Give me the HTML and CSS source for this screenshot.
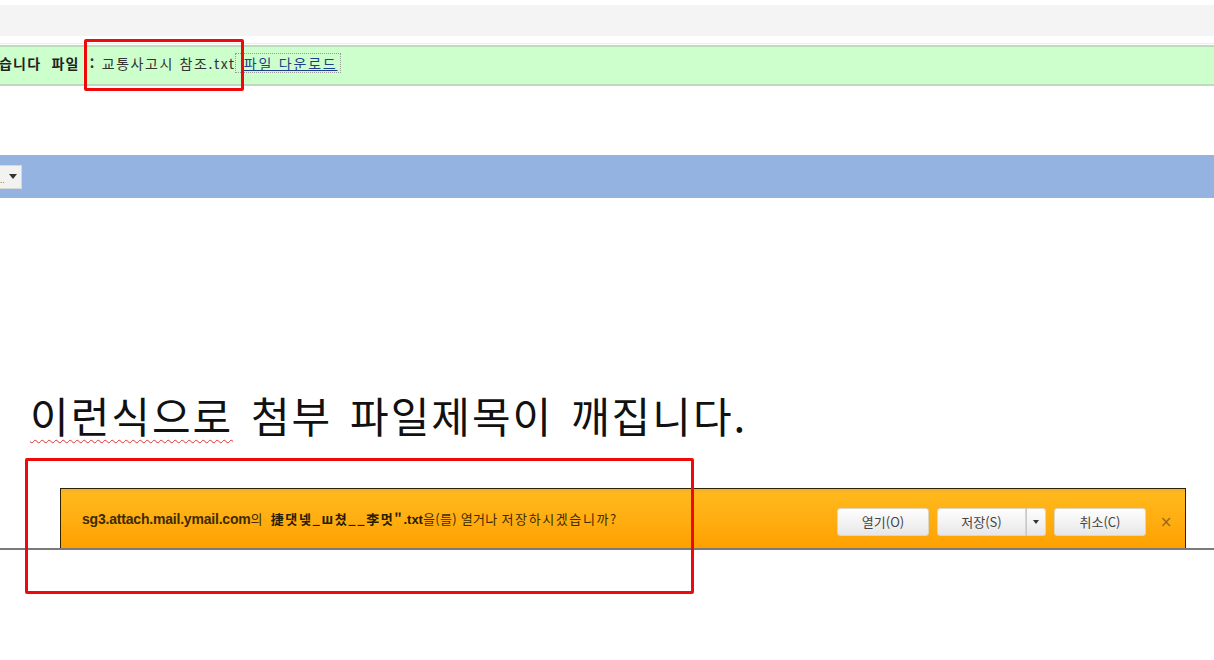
FILE: index.html
```html
<!DOCTYPE html>
<html lang="ko">
<head>
<meta charset="utf-8">
<link rel="stylesheet" href="styles.css">
</head>
<body>
<div class="page">
  <div class="topbar"></div>
  <div class="sep"></div>
  <div class="greenbar">
    <span class="bold">습니다&nbsp; 파일</span><span class="colon">&nbsp;:&nbsp;</span><span class="plain">교통사고시 참조.txt</span><a class="dl">파일 다운로드</a>
  </div>
  <div class="bluebar">
    <div class="select"><span class="sel-text">..</span><span class="caret"></span></div>
  </div>
  <h1 class="big"><span class="spell">이런식으로</span> 첨부 파일제목이 깨집니다.</h1>
  <div class="dialog-area">
    <div class="notice">
      <div class="msg"><span class="host">sg3.attach.mail.ymail.com</span>의 <span class="garbled">捷댓넺_ш쳤__李멋"</span><span class="ext">.txt</span>을(를) 열거나 <span class="q">저장하시겠습니까?</span></div>
      <div class="actions">
        <button class="btn">열기(O)</button>
        <div class="split">
          <button class="btn btn-main">저장(S)</button>
          <button class="btn btn-drop"><span class="caret small"></span></button>
        </div>
        <button class="btn">취소(C)</button>
        <span class="close">×</span>
      </div>
    </div>
  </div>
  <div class="mark mark-file"></div>
  <div class="mark mark-dialog"></div>
</div>
</body>
</html>
```

FILE: styles.css
```css
html, body {
  margin: 0;
  padding: 0;
  background: #ffffff;
}
.page {
  position: relative;
  width: 1214px;
  height: 660px;
  overflow: hidden;
  padding-top: 5px;
  box-sizing: border-box;
  font-family: "Noto Sans CJK KR", "Noto Sans", sans-serif;
}
.topbar {
  height: 31px;
  background: #f4f4f4;
}
.sep {
  height: 4px;
  margin-top: 3px;
  border-bottom: 1px solid #f4ecf4;
  margin-bottom: 1px;
}
.greenbar {
  height: 37px;
  box-sizing: content-box;
  background: #ccffcc;
  border-top: 2px solid #bcdcbc;
  border-bottom: 2px solid #bcdcbc;
  display: flex;
  align-items: center;
  font-size: 14px;
  line-height: 18px;
  color: #333;
  white-space: nowrap;
  letter-spacing: 1.2px;
}
.greenbar > * {
  position: relative;
  top: -3px;
}
.greenbar .bold {
  font-weight: 700;
  color: #222;
  margin-left: -1px;
}
.greenbar .colon {
  font-weight: 700;
  color: #333;
  padding-left: 5px;
  padding-right: 1px;
}
.greenbar .plain {
  color: #333;
  letter-spacing: 1.6px;
}
.greenbar .dl {
  color: #1c3f8c;
  text-decoration: underline;
  margin-left: 0;
  padding: 0 2px 0 8px;
  letter-spacing: 1.8px;
  outline: 1px dotted #999;
}
.bluebar {
  margin-top: 69px;
  height: 43px;
  background: #95b3e0;
  display: flex;
  align-items: center;
}
.select {
  width: 22px;
  height: 24px;
  background: #f2f2f0;
  border: 1px solid #d8d8d8;
  border-left: none;
  display: flex;
  align-items: center;
  justify-content: flex-end;
  padding-right: 4px;
  box-sizing: border-box;
  position: relative;
}
.sel-text {
  position: absolute;
  left: 0;
  bottom: 4px;
  font-size: 8px;
  color: #777;
  line-height: 1;
}
.caret {
  width: 0;
  height: 0;
  border-left: 4px solid transparent;
  border-right: 4px solid transparent;
  border-top: 5px solid #333;
}
.caret.small {
  border-left-width: 3px;
  border-right-width: 3px;
  border-top-width: 4px;
}
.big {
  margin: 192px 0 0 30px;
  font-size: 42px;
  font-weight: 400;
  line-height: 50px;
  color: #111;
  letter-spacing: 2px;
  word-spacing: 4px;
  white-space: nowrap;
}
.spell {
  text-decoration: underline wavy #e03030;
  text-decoration-thickness: 1px;
  text-underline-offset: 6px;
}
.dialog-area {
  margin-top: 48px;
  border-bottom: 2px solid #7a7a7a;
  padding-left: 60px;
  display: flex;
}
.notice {
  width: 1126px;
  height: 60px;
  box-sizing: border-box;
  border: 1px solid #2e2200;
  border-bottom: none;
  background: linear-gradient(to bottom, #eeb030 0%, #ffb81c 8%, #ffad10 55%, #ffa000 100%);
  display: flex;
  align-items: center;
  justify-content: space-between;
  padding: 0 0 0 21px;
}
.msg {
  font-size: 13px;
  color: #3d2b00;
  white-space: nowrap;
  letter-spacing: 0.3px;
}
.msg .host {
  font-family: "Liberation Sans", "Noto Sans", sans-serif;
  font-weight: 700;
  font-size: 14px;
  letter-spacing: -0.2px;
}
.msg .garbled {
  font-weight: 700;
  color: #2a1d00;
  letter-spacing: 1.6px;
  margin-left: 4px;
}
.msg .ext {
  font-family: "Liberation Sans", "Noto Sans", sans-serif;
  font-weight: 700;
  font-size: 13px;
  color: #2a1d00;
  letter-spacing: 0;
}
.msg .q {
  letter-spacing: 1.6px;
}
.actions {
  display: flex;
  align-items: center;
  gap: 8px;
  padding-right: 12px;
  padding-top: 6px;
}
.btn {
  height: 28px;
  width: 92px;
  border: 1px solid #e0d6bc;
  border-radius: 3px;
  background: linear-gradient(to bottom, #fdfdfd 0%, #f2f2f2 55%, #e6e6e6 100%);
  font-family: "Noto Sans CJK KR", "Noto Sans", sans-serif;
  font-size: 13px;
  color: #444;
  padding: 0;
  display: flex;
  align-items: center;
  justify-content: center;
}
.split {
  display: flex;
}
.btn-main {
  width: 89px;
  border-radius: 3px 0 0 3px;
}
.btn-drop {
  width: 20px;
  border-left: 1px solid #c8c8c8;
  border-radius: 0 3px 3px 0;
}
.close {
  font-family: "DejaVu Sans", sans-serif;
  font-size: 15px;
  color: #8f6a20;
  margin-left: 5px;
  width: 14px;
  text-align: center;
}
.mark {
  position: absolute;
  border: 3px solid #ee0a0a;
  border-radius: 2px;
  box-sizing: border-box;
}
.mark-file {
  left: 84px;
  top: 39px;
  width: 160px;
  height: 52px;
}
.mark-dialog {
  left: 25px;
  top: 458px;
  width: 669px;
  height: 136px;
}
```
